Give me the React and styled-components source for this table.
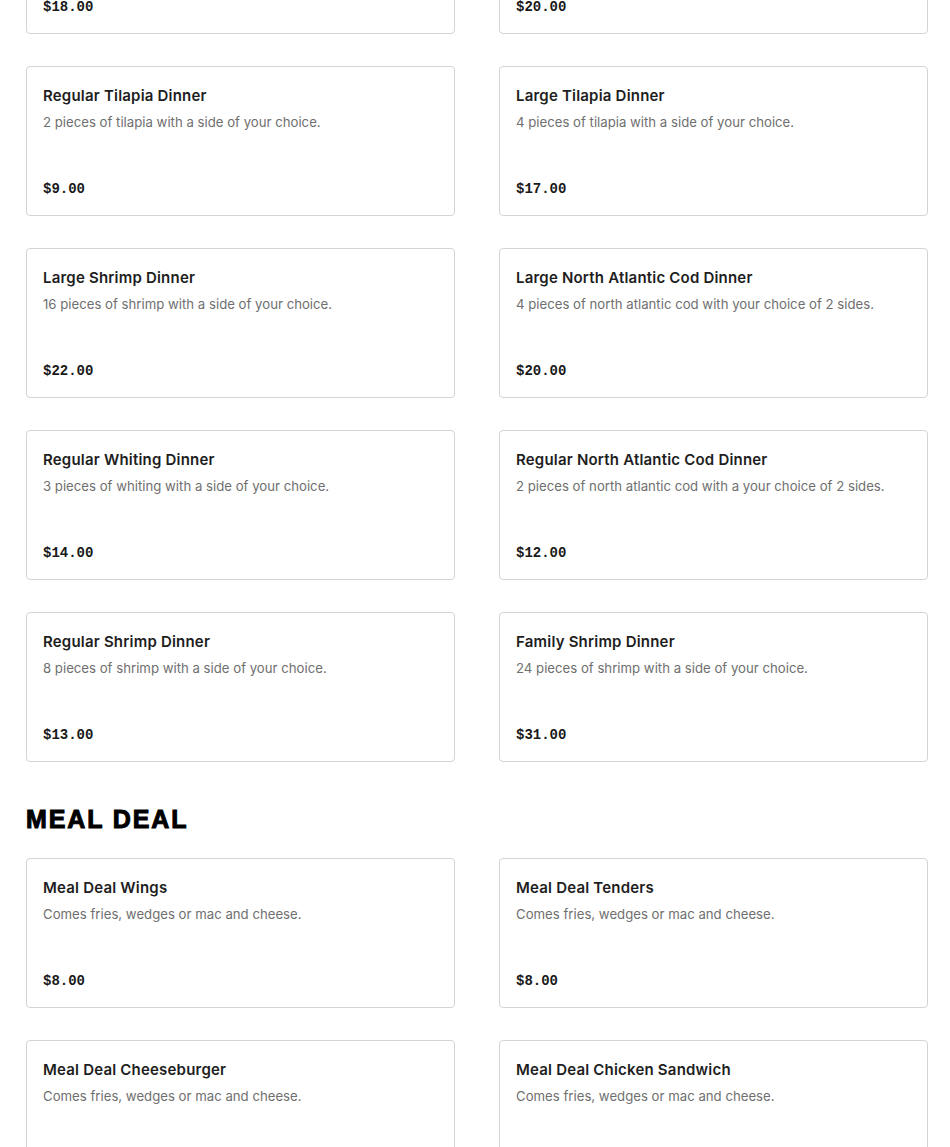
import styled, { createGlobalStyle } from 'styled-components';

const GlobalStyle = createGlobalStyle`
  html, body {
    margin: 0;
    padding: 0;
    background: #ffffff;
    overflow: hidden;
  }
  body {
    font-family: Inter, "Noto Sans", sans-serif;
    color: #191919;
  }
`;

const Menu = styled.div`
  width: 902px;
  padding: 0 22px 0 26px;
  margin-top: -116px;
`;

const Section = styled.section`
  margin-bottom: 42px;
`;

const SectionTitle = styled.h2`
  margin: 0 0 24px;
  font-family: "Liberation Sans", Arial, sans-serif;
  font-size: 25px;
  font-weight: 900;
  line-height: 30px;
  letter-spacing: 1.9px;
  color: #000;
  -webkit-text-stroke: 1px #000;
`;

const Grid = styled.div`
  display: grid;
  grid-template-columns: 1fr 1fr;
  column-gap: 44px;
  row-gap: 32px;
`;

const Card = styled.div`
  box-sizing: border-box;
  height: 150px;
  padding: 16px 16px 14px;
  border: 1px solid #d4d4d4;
  border-radius: 4px;
  display: flex;
  flex-direction: column;
`;

const ItemName = styled.h3`
  margin: 0;
  font-size: 15px;
  font-weight: 600;
  line-height: 26px;
  letter-spacing: 0.2px;
  color: #1e1e1e;
`;

const ItemDesc = styled.p`
  margin: 3px 0 0;
  font-size: 13.2px;
  line-height: 20px;
  color: #6f6f6f;
`;

const Price = styled.span`
  margin-top: auto;
  font-family: "Liberation Mono", "Courier New", monospace;
  font-size: 14px;
  font-weight: 700;
  line-height: 24px;
  color: #191919;
`;

const dinners = [
  { name: 'Family Tilapia Dinner', desc: '8 pieces of tilapia with a side of your choice.', price: '$18.00' },
  { name: 'Large Whiting Dinner', desc: '6 pieces of whiting with a side of your choice.', price: '$20.00' },
  { name: 'Regular Tilapia Dinner', desc: '2 pieces of tilapia with a side of your choice.', price: '$9.00' },
  { name: 'Large Tilapia Dinner', desc: '4 pieces of tilapia with a side of your choice.', price: '$17.00' },
  { name: 'Large Shrimp Dinner', desc: '16 pieces of shrimp with a side of your choice.', price: '$22.00' },
  { name: 'Large North Atlantic Cod Dinner', desc: '4 pieces of north atlantic cod with your choice of 2 sides.', price: '$20.00' },
  { name: 'Regular Whiting Dinner', desc: '3 pieces of whiting with a side of your choice.', price: '$14.00' },
  { name: 'Regular North Atlantic Cod Dinner', desc: '2 pieces of north atlantic cod with a your choice of 2 sides.', price: '$12.00' },
  { name: 'Regular Shrimp Dinner', desc: '8 pieces of shrimp with a side of your choice.', price: '$13.00' },
  { name: 'Family Shrimp Dinner', desc: '24 pieces of shrimp with a side of your choice.', price: '$31.00' },
];

const mealDeals = [
  { name: 'Meal Deal Wings', desc: 'Comes fries, wedges or mac and cheese.', price: '$8.00' },
  { name: 'Meal Deal Tenders', desc: 'Comes fries, wedges or mac and cheese.', price: '$8.00' },
  { name: 'Meal Deal Cheeseburger', desc: 'Comes fries, wedges or mac and cheese.', price: '$8.00' },
  { name: 'Meal Deal Chicken Sandwich', desc: 'Comes fries, wedges or mac and cheese.', price: '$8.00' },
];

const MenuItem = ({ item }) => (
  <Card>
    <ItemName>{item.name}</ItemName>
    <ItemDesc>{item.desc}</ItemDesc>
    <Price>{item.price}</Price>
  </Card>
);

const App = () => (
  <>
    <GlobalStyle />
    <Menu>
      <Section>
        <Grid>
          {dinners.map((item) => (
            <MenuItem key={item.name} item={item} />
          ))}
        </Grid>
      </Section>
      <Section>
        <SectionTitle>MEAL DEAL</SectionTitle>
        <Grid>
          {mealDeals.map((item) => (
            <MenuItem key={item.name} item={item} />
          ))}
        </Grid>
      </Section>
    </Menu>
  </>
);

export default App;
